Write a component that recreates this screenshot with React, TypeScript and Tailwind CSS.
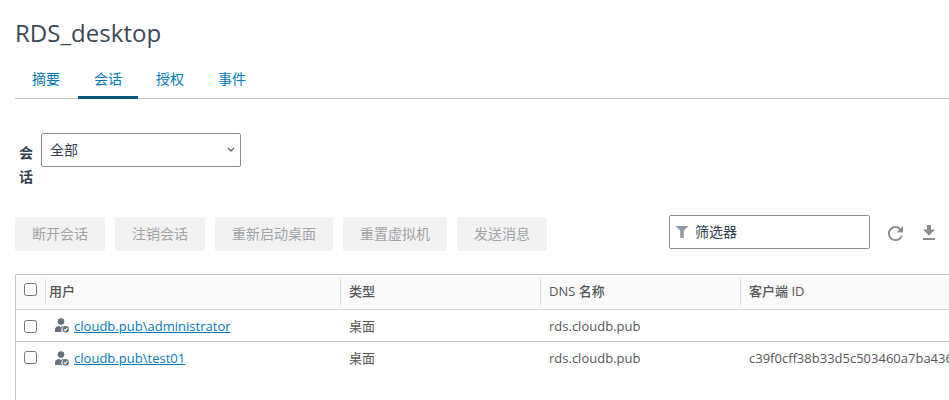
import React from "react";

const tabs = ["摘要", "会话", "授权", "事件"];

const actions = [
  { label: "断开会话", width: "w-[90px]" },
  { label: "注销会话", width: "w-[90px]" },
  { label: "重新启动桌面", width: "w-[118px]" },
  { label: "重置虚拟机", width: "w-[104px]" },
  { label: "发送消息", width: "w-[90px]" },
];

const columns = ["类型", "DNS 名称", "客户端 ID"];

const rows = [
  { user: "cloudb.pub\\administrator", type: "桌面", dns: "rds.cloudb.pub", client: "" },
  { user: "cloudb.pub\\test01", type: "桌面", dns: "rds.cloudb.pub", client: "c39f0cff38b33d5c503460a7ba436" },
];

function Checkbox() {
  return (
    <span
      role="checkbox"
      aria-checked="false"
      className="block h-[13px] w-[13px] shrink-0 rounded-[2.5px] border border-[#767676] bg-white"
    />
  );
}

function UserIcon() {
  return (
    <svg width="14" height="15" viewBox="0 0 14 15" className="shrink-0" fill="#66717c">
      <circle cx="6" cy="3.6" r="3.3" />
      <path d="M0 14V11.2C0 9.3 2 8.1 4.2 7.7L6 9.2L7.6 7.7C8.2 7.8 8.6 7.9 9 8.1A3.9 3.9 0 0 0 6.9 14Z" />
      <circle cx="10.7" cy="11.3" r="3.2" />
      <path d="M9 11.4L10.3 12.6L12.5 10.2" fill="none" stroke="#fff" strokeWidth="1.1" />
    </svg>
  );
}

export default function App() {
  return (
    <div className="h-[400px] w-[949px] overflow-hidden bg-white pl-[15px] font-['Open_Sans','Noto_Sans_CJK_SC',sans-serif] text-[14px] text-[#313f4f]">
      <h1 className="h-[60px] pt-4 text-[24px] leading-[33px] tracking-[0.04px] text-[#3c4856]">RDS_desktop</h1>

      <nav className="flex h-[39px] gap-0.5 border-b border-[#c9c9c9] pl-px">
        {tabs.map((tab) => (
          <a
            key={tab}
            className={
              tab === "会话"
                ? "z-10 h-[39px] w-[60px] border-b-[3px] border-[#0b5578] text-center leading-[38px] text-[#0079b8]"
                : "h-[38px] w-[60px] text-center leading-[38px] text-[#0079b8]"
            }
          >
            {tab}
          </a>
        ))}
      </nav>

      <div className="mt-[34px] flex h-[82px] items-start">
        <label className="mt-2 ml-1 w-[14px] text-[14px] leading-6 font-bold">会话</label>
        <div className="ml-2 flex h-[34px] w-[200px] items-center justify-between rounded-[2px] border border-[#8c8c8c] pr-[5px] pl-2">
          <span className="leading-5">全部</span>
          <svg width="8" height="6" viewBox="0 0 8 6" fill="none" stroke="#4f5965" strokeWidth="1.2">
            <path d="M1 1L4 4L7 1" />
          </svg>
        </div>
      </div>

      <div className="flex h-[59px] items-start">
        <div className="mt-0.5 flex gap-[10px]">
          {actions.map((action) => (
            <button
              key={action.label}
              className={`${action.width} h-[34px] rounded-[2px] bg-[#f2f2f2] text-[14px] leading-[34px] whitespace-nowrap text-[#a0a3a8]`}
            >
              {action.label}
            </button>
          ))}
        </div>
        <div className="ml-[122px] flex h-[34px] w-[201px] items-center rounded-[2px] border border-[#8c8c8c] pl-[5px]">
          <svg width="14" height="14" viewBox="0 0 14 14" fill="#8e9ba7">
            <path d="M.4 1H13.4L8.7 5.8V13H5.2V5.8Z" />
          </svg>
          <span className="ml-[6px] leading-5">筛选器</span>
        </div>
        <svg width="15" height="15" viewBox="4 4 16 16" className="mt-[10.5px] ml-[18px]" fill="#8c8c8c">
          <path d="M17.65 6.35A7.958 7.958 0 0 0 12 4c-4.42 0-7.99 3.58-7.99 8s3.57 8 7.99 8c3.73 0 6.84-2.55 7.73-6h-2.08A5.99 5.99 0 0 1 12 18c-3.31 0-6-2.69-6-6s2.69-6 6-6c1.66 0 3.14.69 4.22 1.78L13 11h7V4z" />
        </svg>
        <svg width="12" height="15" viewBox="0 0 12 15" className="mt-[10px] ml-5" fill="#8c8c8c">
          <path d="M4 0H8V4.5H12L6 10.7L0 4.5H4ZM0 13H12V15H0Z" />
        </svg>
      </div>

      <div className="h-[126px] rounded-tl-[2px] border-t border-l border-[#c4c4c4] text-[13px] text-[#565656]">
        <div className="flex h-[35px] items-start border-b border-[#dcdcdc] bg-[#fafafa] pt-1 font-medium">
          <div className="flex h-[26px] w-[29px] items-start pt-1 pl-2">
            <Checkbox />
          </div>
          <div className="h-[26px] w-[295px] border-l border-[#dcdcdc] pl-[3px] leading-6">用户</div>
          {columns.map((column) => (
            <div key={column} className="h-[26px] w-[200px] border-l border-[#dcdcdc] pl-2 leading-6">
              {column}
            </div>
          ))}
        </div>
        {rows.map((row, index) => (
          <div
            key={row.user}
            className={
              index === 0
                ? "flex h-8 items-center border-b border-[#c9c9c9]"
                : "flex h-8 items-center"
            }
          >
            <div className="flex w-[333px] items-center pl-2">
              <span className={index === 0 ? "mt-px" : "-mt-px"}>
                <Checkbox />
              </span>
              <span className="ml-[18px] flex">
                <UserIcon />
              </span>
              <a className="ml-[5px] leading-5 tracking-[0.02px] text-[#0079b8] underline">{row.user}</a>
            </div>
            <div className="w-[200px] leading-5">{row.type}</div>
            <div className="w-[200px] leading-5">{row.dns}</div>
            <div className="w-[200px] leading-5">{row.client}</div>
          </div>
        ))}
      </div>
    </div>
  );
}
